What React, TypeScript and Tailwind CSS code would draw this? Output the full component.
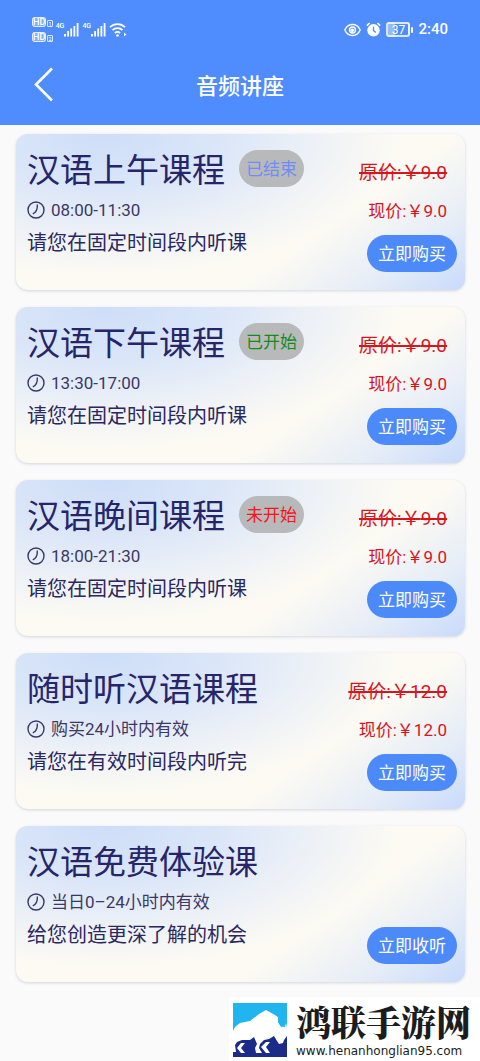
import React from 'react';

const courses = [
	{
		title: '汉语上午课程',
		status: '已结束',
		statusColor: 'text-[#6f8df5]',
		time: '08:00-11:30',
		desc: '请您在固定时间段内听课',
		price: '9.0',
		action: '立即购买',
	},
	{
		title: '汉语下午课程',
		status: '已开始',
		statusColor: 'text-[#168a1c]',
		time: '13:30-17:00',
		desc: '请您在固定时间段内听课',
		price: '9.0',
		action: '立即购买',
	},
	{
		title: '汉语晚间课程',
		status: '未开始',
		statusColor: 'text-[#f5141b]',
		time: '18:00-21:30',
		desc: '请您在固定时间段内听课',
		price: '9.0',
		action: '立即购买',
	},
	{
		title: '随时听汉语课程',
		time: '购买24小时内有效',
		desc: '请您在有效时间段内听完',
		price: '12.0',
		action: '立即购买',
	},
	{
		title: '汉语免费体验课',
		time: '当日0–24小时内有效',
		desc: '给您创造更深了解的机会',
		action: '立即收听',
	},
];

function HdBadge({ sim }: { sim: string }) {
	return (
		<div className="flex items-end gap-px">
			<span className="rounded-[3px] border border-white/80 bg-white/30 text-[9px] leading-[8px] font-medium">
				HD
			</span>
			<span className="rounded-[1px] border border-white/80 text-[6px] leading-[5px]">
				{sim}
			</span>
		</div>
	);
}

function Signal() {
	return (
		<div className="flex">
			<span className="text-[7px] leading-[8px] font-medium">4G</span>
			<svg className="h-[15px] w-[15px]" viewBox="0 0 15 15" fill="currentColor">
				<rect x="0" y="12" width="2" height="2.5" />
				<rect x="3.2" y="9" width="1.8" height="5.5" />
				<rect x="6.3" y="6.5" width="1.8" height="8" />
				<rect x="9.5" y="4" width="1.8" height="10.5" />
				<rect x="12.7" y="1" width="1.8" height="13.5" />
			</svg>
		</div>
	);
}

function StatusBar() {
	return (
		<div className="flex h-[59px] items-center justify-between pr-8 pl-8">
			<div className="flex items-center gap-[3px]">
				<div className="flex flex-col gap-[5px]">
					<HdBadge sim="1" />
					<HdBadge sim="2" />
				</div>
				<Signal />
				<Signal />
				<svg className="h-4 w-[18px]" viewBox="0 0 18 16" fill="none" stroke="currentColor" strokeWidth="1.8">
					<path d="M1 5.2a10.5 10.5 0 0 1 15 0" />
					<path d="M3.5 8.2a7 7 0 0 1 10 0" />
					<path d="M5.9 11a3.8 3.8 0 0 1 5.2 0" />
					<circle cx="8.5" cy="13.5" r="1.3" fill="currentColor" stroke="none" />
					<path d="M15 10.5v4l2.5-2z" fill="currentColor" stroke="none" />
				</svg>
			</div>
			<div className="flex items-center gap-[5px]">
				<svg className="h-[14px] w-[17px]" viewBox="0 0 17 14" fill="none" stroke="currentColor" strokeWidth="1.4">
					<path d="M.8 7C4 -.3 13 -.3 16.2 7 13 14.3 4 14.3.8 7z" />
					<circle cx="8.5" cy="7" r="3" />
					<circle cx="8.3" cy="7.2" r="1.8" fill="currentColor" stroke="none" />
				</svg>
				<svg className="h-[15px] w-[15px]" viewBox="0 0 15 15">
					<circle cx="7.5" cy="8.3" r="6.2" fill="currentColor" />
					<path d="M.9 3.6 3.6 1M14.1 3.6 11.4 1" stroke="currentColor" strokeWidth="1.6" />
					<path d="M7.5 4.8v3.8l2.3 2" fill="none" stroke="#4f8cfe" strokeWidth="1.3" />
				</svg>
				<div className="flex items-center gap-px">
					<div className="flex h-[15px] w-6 items-center justify-center rounded-[3px] border-2 border-white/80 bg-linear-to-r from-white/40 from-37% to-transparent to-37% text-[12px] leading-none">
						37
					</div>
					<span className="h-[6px] w-[2px] rounded-sm bg-white" />
				</div>
				<span className="text-[15px] font-medium">2:40</span>
			</div>
		</div>
	);
}

function ClockIcon() {
	return (
		<svg className="h-[18px] w-[18px]" viewBox="0 0 18 18" fill="none" stroke="currentColor" strokeWidth="1.4">
			<circle cx="9" cy="9" r="8" />
			<path d="M10.3 3.5c.3 4.5-.6 7.6-4.5 9.4" />
		</svg>
	);
}

function CourseCard({ course }: { course: (typeof courses)[number] }) {
	return (
		<li className="flex h-[156px] justify-between rounded-[12px] bg-[#fcfaf3] bg-[radial-gradient(ellipse_65%_90%_at_20%_0%,#cedef8_0%,#dbe6f8_40%,#ebf0f7_68%,transparent_100%),linear-gradient(145deg,transparent_66%,#e6edf7_84%,#c8dafb_100%)] pr-2 pl-[11px] shadow-[0_1px_3px_rgba(120,130,150,0.3)]">
			<div className="flex flex-col text-[#2c2760]">
				<div className="mt-4 flex h-11 items-start gap-[14px]">
					<h2 className="pt-px text-[33px] leading-[40px] text-[#262569]">{course.title}</h2>
					{course.status && (
						<span
							className={`rounded-full bg-[#b8b9ba] px-[7px] pt-px text-[17px] leading-9 ${course.statusColor}`}
						>
							{course.status}
						</span>
					)}
				</div>
				<div className="mt-[6px] flex items-center gap-[6px] text-[17px] leading-5 text-[#3c3866]">
					<ClockIcon />
					{course.time}
				</div>
				<p className="mt-[9px] text-[20px] leading-7">{course.desc}</p>
			</div>
			<div className="flex flex-col items-end justify-end pb-[18px] text-[#d8151d]">
				{course.price && (
					<>
						<del className="mr-[10px] text-[19px] leading-6 decoration-2">原价:￥{course.price}</del>
						<span className="mt-[14px] mr-[10px] mb-3 text-[17px] leading-6">现价:￥{course.price}</span>
					</>
				)}
				<button
					type="button"
					className="rounded-full bg-[#4d8af9] px-[11px] pt-[2px] text-[17px] leading-[35px] text-white"
				>
					{course.action}
				</button>
			</div>
		</li>
	);
}

function SiteMark() {
	return (
		<a
			href="#"
			className="absolute right-0 bottom-0 flex h-[65px] w-[251px] items-start gap-[9px] bg-white pt-[6px] pl-1 text-[#1c1c1c]"
		>
			<svg className="h-[54px] w-[54px] shrink-0" viewBox="0 0 54 54">
				<path d="M0 0h54v54H0z" fill="#21b5ef" />
				<path d="M0 31h54v23H0z" fill="#1b2b88" />
				<path
					d="M0 42V28L2 24 7 20 17 18 26 11 33 7 42 12 46 15 45 19 48 23 52 24 53 20 54 25V33L51 37 50 40 46 41 44 38 41 33 36 36 31 37 27 41 26 45 29 50H23L22 45 24 41 21 34 17 37 9 37 4 39 2 42 3 49H0z"
					fill="#fff"
				/>
				<path d="M48 11 45 15 45 19 48 24 51 23 50 18 47 16z" fill="#21b5ef" />
				<path
					d="M12 40H8L4 45 8 50H12L8 45zM37 39H33L28 44 33 50H37L33 44z"
					fill="#fff"
				/>
			</svg>
			<div>
				<div className="font-['Noto_Serif_CJK_SC','Noto_Sans_CJK_SC',serif] text-[35px] leading-9 font-black">
					鸿联手游网
				</div>
				<div className="mt-1 font-['DejaVu_Sans',sans-serif] text-[12px] leading-4">
					www.henanhonglian95.com
				</div>
			</div>
		</a>
	);
}

function App() {
	return (
		<div className="relative min-h-screen bg-[#fafafb] font-['Roboto','Noto_Sans_CJK_SC',sans-serif]">
			<header className="bg-[#4f8cfe] text-white">
				<StatusBar />
				<div className="grid h-[66px] grid-cols-[1fr_auto_1fr] items-start">
					<button type="button" aria-label="返回" className="mt-2 ml-[34px] w-5">
						<svg className="h-9 w-5" viewBox="0 0 20 36" fill="none" stroke="currentColor" strokeWidth="2.6">
							<path d="M18 1.5 2 17.5 18 33.5" />
						</svg>
					</button>
					<h1 className="mt-[13px] text-[22px] leading-[30px] font-medium">音频讲座</h1>
				</div>
			</header>
			<ul className="flex flex-col gap-[17px] pt-[9px] pr-[15px] pb-20 pl-4">
				{courses.map((course) => (
					<CourseCard key={course.title} course={course} />
				))}
			</ul>
			<SiteMark />
		</div>
	);
}

export default App;
